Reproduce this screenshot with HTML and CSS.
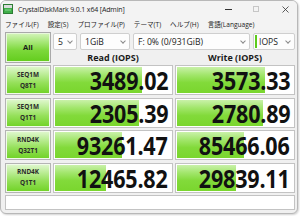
FILE: index.html
```html
<!DOCTYPE html>
<html>
<head>
<meta charset="utf-8">
<link rel="stylesheet" href="styles.css">
</head>
<body>
<div class="window">
  <div class="titlebar">
    <svg class="app-icon" viewBox="0 0 10 10" width="10" height="10">
      <rect x="0.5" y="0.5" width="9" height="9" fill="#3fae49" stroke="#2d7d34" stroke-width="1"/>
      <rect x="1" y="1" width="8" height="3" fill="#d9dcdc"/>
      <rect x="2" y="5.5" width="6" height="1" fill="#8fd694"/>
    </svg>
    <span class="title">CrystalDiskMark 9.0.1 x64 [Admin]</span>
    <div class="controls">
      <span class="ctl ctl-min"></span>
      <span class="ctl ctl-max"></span>
      <svg class="ctl ctl-close" viewBox="0 0 7 7" width="7" height="7"><path d="M0.5 0.5 L6.5 6.5 M6.5 0.5 L0.5 6.5" stroke="#333" stroke-width="0.8"/></svg>
    </div>
  </div>
  <div class="menubar">
    <span>ファイル(F)</span>
    <span>設定(S)</span>
    <span>プロファイル(P)</span>
    <span>テーマ(T)</span>
    <span>ヘルプ(H)</span>
    <span>言語(Language)</span>
  </div>
  <div class="main">
    <div class="all">All</div>
    <div class="selectors">
      <div class="combo c-count"><span>5</span><i class="chev"></i></div>
      <div class="combo c-size"><span>1GiB</span><i class="chev"></i></div>
      <div class="combo c-drive"><span>F: 0% (0/931GiB)</span><i class="chev"></i></div>
      <div class="combo c-unit"><b class="focus"></b><span>IOPS</span><i class="chev"></i></div>
    </div>
    <div class="hdr">Read (IOPS)</div>
    <div class="hdr">Write (IOPS)</div>

    <div class="label"><span>SEQ1M</span><span>Q8T1</span></div>
    <div class="cell"><div class="bar" style="width:75%"></div><span class="num">3489.02</span></div>
    <div class="cell"><div class="bar" style="width:76%"></div><span class="num">3573.33</span></div>

    <div class="label"><span>SEQ1M</span><span>Q1T1</span></div>
    <div class="cell"><div class="bar" style="width:72%"></div><span class="num">2305.39</span></div>
    <div class="cell"><div class="bar" style="width:74%"></div><span class="num">2780.89</span></div>

    <div class="label"><span>RND4K</span><span>Q32T1</span></div>
    <div class="cell"><div class="bar" style="width:58%"></div><span class="num">93261.47</span></div>
    <div class="cell"><div class="bar" style="width:58%"></div><span class="num">85466.06</span></div>

    <div class="label"><span>RND4K</span><span>Q1T1</span></div>
    <div class="cell"><div class="bar" style="width:44%"></div><span class="num">12465.82</span></div>
    <div class="cell"><div class="bar" style="width:51%"></div><span class="num">29839.11</span></div>

    <div class="status"></div>
  </div>
</div>
</body>
</html>
```

FILE: styles.css
```css
* {
  box-sizing: border-box;
  margin: 0;
  padding: 0;
}

html, body {
  width: 300px;
  height: 216px;
  overflow: hidden;
  background: #ffffff;
}

body {
  font-family: "Open Sans", "Noto Sans CJK JP", sans-serif;
  color: #1a1a1a;
}

.window {
  width: 298px;
  height: 214px;
  border: 1px solid #b8b8b8;
  border-radius: 6px;
  background: #f0f0f0;
  display: flex;
  flex-direction: column;
  overflow: hidden;
  box-shadow: 1px 1px 2px rgba(0, 0, 0, 0.18);
}

.titlebar {
  height: 16px;
  flex: none;
  display: flex;
  align-items: center;
  padding-left: 2px;
  background: #f3f3f3;
}

.app-icon {
  display: block;
  margin-right: 5px;
}

.title {
  font-size: 7px;
  letter-spacing: -0.15px;
  color: #1b1b1b;
}

.controls {
  margin-left: auto;
  display: flex;
  align-items: center;
  padding-right: 8px;
}

.ctl {
  display: block;
}

.ctl-min {
  width: 7px;
  height: 1px;
  background: #333;
  margin-right: 21px;
}

.ctl-max {
  width: 6px;
  height: 6px;
  border: 1px solid #c6c6c6;
  margin-right: 23px;
}

.menubar {
  height: 13px;
  flex: none;
  display: flex;
  align-items: center;
  gap: 9px;
  padding-left: 4px;
  font-size: 6.6px;
  color: #1b1b1b;
  background: #f3f3f3;
}

.main {
  flex: 1;
  display: grid;
  grid-template-columns: 46px 120px 120px;
  grid-template-rows: 17px 11px 30px 30px 30px 30px 15px;
  column-gap: 2px;
  row-gap: 2.5px;
  padding: 2px 0 0 4px;
}

.all {
  grid-row: 1 / span 2;
  border: 1px solid #a9a9a9;
  background: linear-gradient(#d6f5bd 0%, #a8e87a 30%, #7cd83a 60%, #62cc1c 100%);
  box-shadow: inset 0 0 0 1px #e8f8dc;
  display: flex;
  align-items: center;
  justify-content: center;
  font-weight: 700;
  font-size: 7.5px;
  color: #1a1a1a;
}

.selectors {
  grid-column: 2 / span 2;
  display: flex;
  gap: 3px;
  padding-top: 1px;
}

.combo {
  height: 17px;
  background: #fdfdfd;
  border: 1px solid #cfcfcf;
  border-radius: 2px;
  display: flex;
  align-items: center;
  padding-left: 4px;
  font-size: 8.6px;
  color: #1b1b1b;
}

.c-count { width: 24px; }
.c-size { width: 50px; }
.c-drive { width: 117px; }
.c-unit { flex: 1; padding-left: 1px; }

.focus {
  display: block;
  width: 2px;
  height: 13px;
  background: #5ccb1a;
  margin-right: 2px;
}

.chev {
  margin-left: auto;
  margin-right: 4px;
  width: 4px;
  height: 4px;
  border-right: 1px solid #8a8a8a;
  border-bottom: 1px solid #8a8a8a;
  transform: translateY(-1px) rotate(45deg);
}

.hdr {
  text-align: center;
  font-weight: 700;
  font-size: 9px;
  line-height: 11px;
  height: 11px;
  color: #1a1a1a;
  overflow: visible;
}

.label {
  border: 1px solid #b4b4b4;
  background: linear-gradient(#e2f8d2 0%, #c2efa0 25%, #95e05a 60%, #6fd224 100%);
  box-shadow: inset 0 0 0 1px #f1fbe9;
  display: flex;
  flex-direction: column;
  align-items: center;
  justify-content: center;
  gap: 3px;
  font-weight: 700;
  font-size: 6.4px;
  line-height: 8px;
  color: #2a2a2a;
}

.cell {
  border: 1px solid #c3c3c3;
  background: #ffffff;
  padding: 1px;
  display: grid;
}

.bar {
  grid-area: 1 / 1;
  height: 100%;
  background: linear-gradient(#c9f1a9 0%, #a2e66c 30%, #82da3a 60%, #7ad62e 100%);
}

.num {
  grid-area: 1 / 1;
  justify-self: end;
  align-self: center;
  font-weight: 700;
  font-size: 25px;
  line-height: 26px;
  color: #111;
  transform: scaleX(0.86);
  transform-origin: right center;
  margin-right: 3px;
  letter-spacing: -0.2px;
}

.status {
  grid-column: 1 / span 3;
  border: 1px solid #c3c3c3;
  background: #ffffff;
}
```
